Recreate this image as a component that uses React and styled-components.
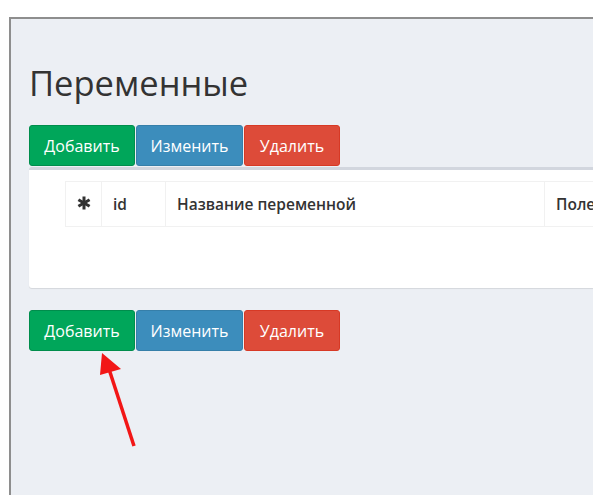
import React from 'react';
import styled, { createGlobalStyle } from 'styled-components';

const Global = createGlobalStyle`
  html, body { margin: 0; padding: 0; background: #fff; }
  body { font-family: "Open Sans", "Liberation Sans", sans-serif; color: #333; }
`;

const Page = styled.div`
  position: relative;
  height: 495px;
  overflow: hidden;
  padding: 17px 0 0 9px;
  box-sizing: border-box;
`;

const Frame = styled.div`
  height: 100%;
  border-top: 2px solid #8e8e8e;
  border-left: 2px solid #8e8e8e;
  background: #eceff4;
  padding: 44px 0 0 18px;
  box-sizing: border-box;
`;

const Title = styled.h1`
  margin: 0 0 22px 0;
  font-size: 34.5px;
  font-weight: 400;
  line-height: 40px;
  color: #333;
`;

const BtnGroup = styled.div`
  display: flex;
  gap: 1px;
`;

const COLORS = {
  success: { bg: '#00a65a', border: '#008d4c' },
  primary: { bg: '#3c8dbc', border: '#367fa9' },
  danger: { bg: '#dd4b39', border: '#d73925' },
};

const Btn = styled.button`
  height: 41px;
  width: ${(p) => p.$w}px;
  padding: 0;
  border: 1px solid ${(p) => COLORS[p.$kind].border};
  border-radius: 3px;
  background: ${(p) => COLORS[p.$kind].bg};
  color: #fff;
  font-family: inherit;
  font-size: 16px;
`;

const Box = styled.div`
  margin-top: 1px;
  height: 121px;
  background: #fff;
  border-top: 3px solid #d2d6de;
  border-radius: 3px 0 0 3px;
  box-shadow: 0 1px 1px rgba(0, 0, 0, 0.1);
  padding: 11px 0 0 36px;
  box-sizing: border-box;
  margin-bottom: 22px;
  overflow: hidden;
`;

const Table = styled.table`
  border-collapse: collapse;
  white-space: nowrap;
`;

const Th = styled.th`
  height: 45px;
  border: 1px solid #f1f1f1;
  padding: 0 11px;
  text-align: left;
  font-size: 15.5px;
  font-weight: 600;
  color: #333;
  min-width: ${(p) => (p.$w ? `${p.$w}px` : '0')};
  box-sizing: border-box;
`;

const StarTh = styled(Th)`
  padding: 0;
  text-align: center;
`;

const Arrow = styled.svg`
  position: absolute;
  left: 0;
  top: 0;
  pointer-events: none;
`;

function Buttons() {
  return (
    <BtnGroup>
      <Btn $kind="success" $w={106}>Добавить</Btn>
      <Btn $kind="primary" $w={107}>Изменить</Btn>
      <Btn $kind="danger" $w={96}>Удалить</Btn>
    </BtnGroup>
  );
}

export default function App() {
  return (
    <>
      <Global />
      <Page>
        <Frame>
          <Title>Переменные</Title>
          <Buttons />
          <Box>
            <Table>
              <thead>
                <tr>
                  <StarTh $w={36}>
                    <svg width="14" height="14" viewBox="0 0 14 14">
                      <g stroke="#333" strokeWidth="3" strokeLinecap="butt">
                        <line x1="7" y1="0.5" x2="7" y2="13.5" />
                        <line x1="1.4" y1="3.75" x2="12.6" y2="10.25" />
                        <line x1="1.4" y1="10.25" x2="12.6" y2="3.75" />
                      </g>
                    </svg>
                  </StarTh>
                  <Th $w={64}>id</Th>
                  <Th $w={379}>Название переменной</Th>
                  <Th>Поле переменной</Th>
                </tr>
              </thead>
            </Table>
          </Box>
          <Buttons />
        </Frame>
        <Arrow width="593" height="495" viewBox="0 0 593 495">
          <line x1="134" y1="446" x2="108" y2="366" stroke="#f21616" strokeWidth="3.5" />
          <polygon points="102,353 100,375 121,369" fill="#f21616" />
        </Arrow>
      </Page>
    </>
  );
}
